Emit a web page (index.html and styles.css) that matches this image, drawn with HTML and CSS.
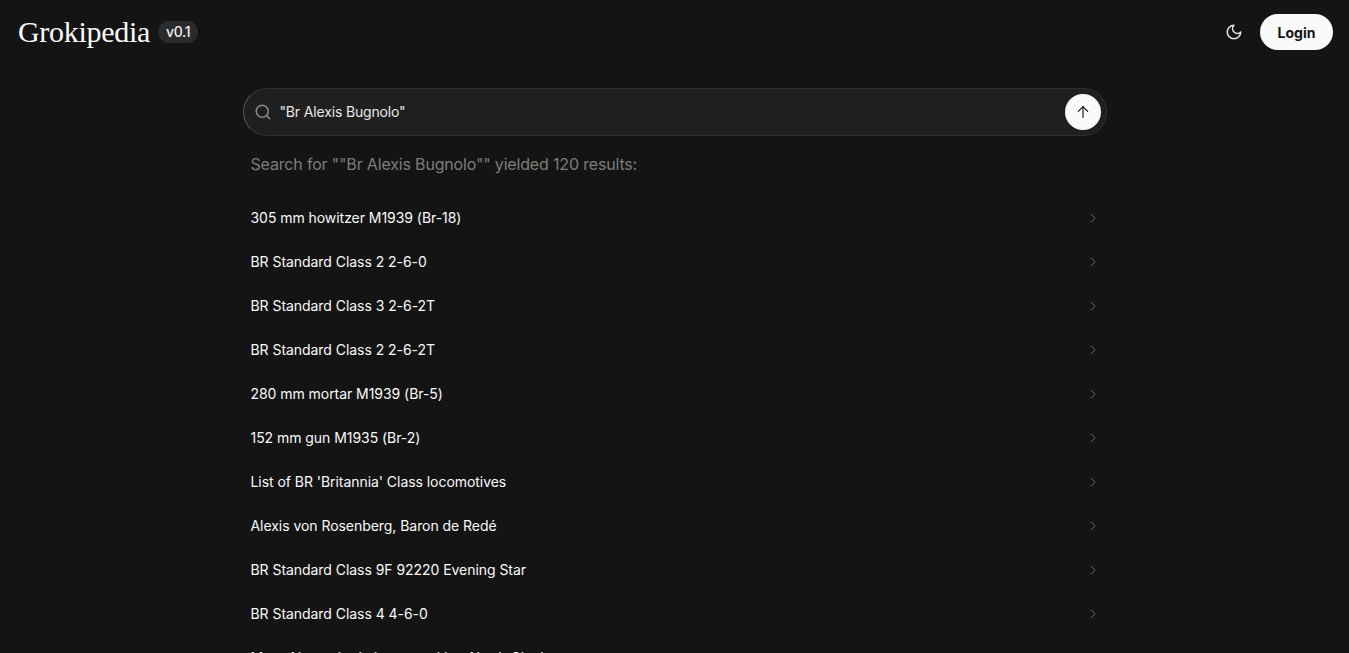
FILE: index.html
```html
<!DOCTYPE html>
<html lang="en">
<head>
    <meta charset="UTF-8">
    <meta name="viewport" content="width=device-width, initial-scale=1.0">
    <title>Grokipedia</title>
    <link rel="stylesheet" href="styles.css">
</head>
<body>
    <header class="topbar">
        <div class="brand">
            <span class="logo">Grokipedia</span>
            <span class="version">v0.1</span>
        </div>
        <div class="actions">
            <button class="theme-button" aria-label="Toggle theme">
                <svg width="18" height="18" viewBox="0 0 24 24" fill="none" stroke="currentColor" stroke-width="2" stroke-linecap="round" stroke-linejoin="round"><path d="M12 3a6 6 0 0 0 9 9 9 9 0 1 1-9-9Z"/></svg>
            </button>
            <button class="login-button">Login</button>
        </div>
    </header>

    <main class="content">
        <form class="search-box">
            <svg class="search-icon" width="18" height="18" viewBox="0 0 24 24" fill="none" stroke="currentColor" stroke-width="2" stroke-linecap="round" stroke-linejoin="round"><circle cx="11" cy="11" r="8"/><path d="m21 21-4.3-4.3"/></svg>
            <input class="search-input" type="text" value="&quot;Br Alexis Bugnolo&quot;">
            <button class="submit-button" type="button" aria-label="Search">
                <svg width="16" height="16" viewBox="0 0 24 24" fill="none" stroke="currentColor" stroke-width="1.75" stroke-linecap="round" stroke-linejoin="round"><path d="M12 20V4"/><path d="m5 11 7-7 7 7"/></svg>
            </button>
        </form>

        <p class="summary">Search for ""Br Alexis Bugnolo"" yielded 120 results:</p>

        <ul class="results">
            <li class="result"><span>305 mm howitzer M1939 (Br-18)</span><svg class="chevron" viewBox="0 0 24 24"><path d="m9 18 6-6-6-6"/></svg></li>
            <li class="result"><span>BR Standard Class 2 2-6-0</span><svg class="chevron" viewBox="0 0 24 24"><path d="m9 18 6-6-6-6"/></svg></li>
            <li class="result"><span>BR Standard Class 3 2-6-2T</span><svg class="chevron" viewBox="0 0 24 24"><path d="m9 18 6-6-6-6"/></svg></li>
            <li class="result"><span>BR Standard Class 2 2-6-2T</span><svg class="chevron" viewBox="0 0 24 24"><path d="m9 18 6-6-6-6"/></svg></li>
            <li class="result"><span>280 mm mortar M1939 (Br-5)</span><svg class="chevron" viewBox="0 0 24 24"><path d="m9 18 6-6-6-6"/></svg></li>
            <li class="result"><span>152 mm gun M1935 (Br-2)</span><svg class="chevron" viewBox="0 0 24 24"><path d="m9 18 6-6-6-6"/></svg></li>
            <li class="result"><span>List of BR 'Britannia' Class locomotives</span><svg class="chevron" viewBox="0 0 24 24"><path d="m9 18 6-6-6-6"/></svg></li>
            <li class="result"><span>Alexis von Rosenberg, Baron de Redé</span><svg class="chevron" viewBox="0 0 24 24"><path d="m9 18 6-6-6-6"/></svg></li>
            <li class="result"><span>BR Standard Class 9F 92220 Evening Star</span><svg class="chevron" viewBox="0 0 24 24"><path d="m9 18 6-6-6-6"/></svg></li>
            <li class="result"><span>BR Standard Class 4 4-6-0</span><svg class="chevron" viewBox="0 0 24 24"><path d="m9 18 6-6-6-6"/></svg></li>
            <li class="result"><span>Mary Alexander Imhotep and her North Glauber</span><svg class="chevron" viewBox="0 0 24 24"><path d="m9 18 6-6-6-6"/></svg></li>
        </ul>
    </main>
</body>
</html>
```

FILE: styles.css
```css
/* page */
html, body {
    height: 100%;
    overflow: hidden;
}

body {
    margin: 0;
    background-color: #141414;
    color: #fafafa;
    font-family: Inter, 'Liberation Sans', sans-serif;
}

/* header */
.topbar {
    display: flex;
    justify-content: space-between;
    align-items: center;
    height: 64px;
    padding: 0 16px 0 18px;
    box-sizing: border-box;
}

.brand {
    display: flex;
    align-items: center;
    gap: 8px;
}

.logo {
    font-family: 'Liberation Serif', serif;
    font-size: 30px;
    line-height: 36px;
    letter-spacing: -0.3px;
    color: #fafafa;
}

.version {
    padding: 0 8px;
    height: 22px;
    line-height: 22px;
    border-radius: 11px;
    background-color: #2b2b2b;
    color: #f0f0f0;
    font-size: 14px;
    font-weight: 500;
    letter-spacing: -0.3px;
}

.actions {
    display: flex;
    align-items: center;
    gap: 8px;
}

.theme-button {
    display: flex;
    align-items: center;
    justify-content: center;
    width: 36px;
    height: 36px;
    padding: 0;
    border: none;
    background: none;
    color: #e4e4e4;
}

.login-button {
    width: 73px;
    height: 36px;
    padding: 0;
    border: none;
    border-radius: 18px;
    background-color: #fafafa;
    color: #141414;
    font-family: inherit;
    font-size: 14px;
    font-weight: 700;
}

/* search */
.content {
    width: 864px;
    margin: 24px auto 0;
}

.search-box {
    display: flex;
    align-items: center;
    height: 48px;
    padding: 0 5px 0 10px;
    box-sizing: border-box;
    border: 1px solid #303030;
    border-left-color: #555;
    border-radius: 24px;
    background-color: #1f1f1f;
}

.search-icon {
    flex-shrink: 0;
    color: #8a8a8a;
}

.search-input {
    flex: 1;
    min-width: 0;
    height: 20px;
    margin: -2px 0 0 8px;
    padding: 0;
    border: none;
    outline: none;
    background: none;
    color: #e8e8e8;
    font-family: inherit;
    font-size: 14px;
    letter-spacing: -0.16px;
}

.submit-button {
    display: flex;
    align-items: center;
    justify-content: center;
    flex-shrink: 0;
    width: 36px;
    height: 36px;
    padding: 0;
    border: none;
    border-radius: 50%;
    background-color: #fafafa;
    color: #141414;
}

.summary {
    margin: 18px 8px 21px;
    color: #7d7d7d;
    font-size: 16px;
    line-height: 20px;
    letter-spacing: -0.17px;
}

/* results */
.results {
    margin: 0;
    padding: 0 6px 0 8px;
    list-style: none;
}

.result {
    display: flex;
    justify-content: space-between;
    align-items: center;
    height: 44px;
    font-size: 14px;
    letter-spacing: -0.05px;
    color: #fafafa;
}

.chevron {
    width: 16px;
    height: 16px;
    margin-top: 1px;
    fill: none;
    stroke: #6f6f6f;
    stroke-width: 1.25;
    stroke-linecap: round;
    stroke-linejoin: round;
}
```
